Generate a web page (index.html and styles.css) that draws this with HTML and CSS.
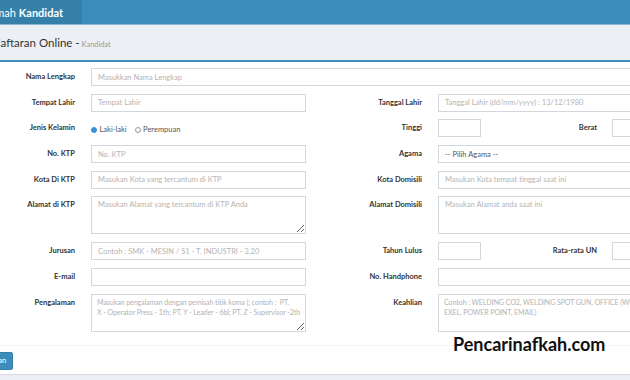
FILE: index.html
```html
<!DOCTYPE html>
<html lang="id">
<head>
<meta charset="utf-8">
<title>Pendaftaran Online - Kandidat</title>
<link rel="stylesheet" href="styles.css">
</head>
<body>
<div class="page">
  <header class="main-header">
    <div class="logo"><span>Rumah&nbsp;</span><b>Kandidat</b></div>
    <nav class="navbar"></nav>
  </header>
  <section class="content-header">
    <h1 class="title">Pendaftaran Online <span class="dash">-</span> <small>Kandidat</small></h1>
  </section>
  <section class="content">
    <div class="box">
      <form class="form">
        <label class="lbl">Nama Lengkap</label>
        <input class="in wide" type="text" placeholder="Masukkan Nama Lengkap">

        <label class="lbl">Tempat Lahir</label>
        <input class="in" type="text" placeholder="Tempat Lahir">
        <label class="lbl">Tanggal Lahir</label>
        <input class="in" type="text" placeholder="Tanggal Lahir (dd/mm/yyyy) : 13/12/1980">

        <label class="lbl">Jenis Kelamin</label>
        <div class="radios">
          <span class="radio on"></span><span class="rtext">Laki-laki</span>
          <span class="radio"></span><span class="rtext">Perempuan</span>
        </div>
        <label class="lbl">Tinggi</label>
        <div class="pair">
          <input class="in s1" type="text">
          <label class="lbl grow">Berat</label>
          <input class="in s2" type="text">
        </div>

        <label class="lbl">No. KTP</label>
        <input class="in" type="text" placeholder="No. KTP">
        <label class="lbl">Agama</label>
        <select class="in sel"><option>-- Pilih Agama --</option></select>

        <label class="lbl">Kota Di KTP</label>
        <input class="in" type="text" placeholder="Masukan Kota yang tercantum di KTP">
        <label class="lbl">Kota Domisili</label>
        <input class="in" type="text" placeholder="Masukan Kota tempat tinggal saat ini">

        <label class="lbl">Alamat di KTP</label>
        <textarea class="in ta" placeholder="Masukan Alamat yang tercantum di KTP Anda"></textarea>
        <label class="lbl">Alamat Domisili</label>
        <textarea class="in ta" placeholder="Masukan Alamat anda saat ini"></textarea>

        <label class="lbl">Jurusan</label>
        <input class="in" type="text" placeholder="Contoh : SMK - MESIN / S1 - T. INDUSTRI - 3,20">
        <label class="lbl">Tahun Lulus</label>
        <div class="pair">
          <input class="in s1" type="text">
          <label class="lbl grow">Rata-rata UN</label>
          <input class="in s2" type="text">
        </div>

        <label class="lbl">E-mail</label>
        <input class="in" type="text">
        <label class="lbl">No. Handphone</label>
        <input class="in" type="text">

        <label class="lbl">Pengalaman</label>
        <textarea class="in ta long" placeholder="Masukan pengalaman dengan pemisah titik koma (; contoh :  PT.&#10;X - Operator Press - 1th; PT. Y - Leader - 6bl; PT. Z - Supervisor -2th"></textarea>
        <label class="lbl">Keahlian</label>
        <textarea class="in ta long" placeholder="Contoh : WELDING CO2, WELDING SPOT GUN, OFFICE (WORD,&#10;EXEL, POWER POINT, EMAIL)"></textarea>
      </form>
      <div class="box-footer"><button class="btn" type="button">Simpan</button></div>
    </div>
  </section>
</div>
<div class="watermark">Pencarinafkah.com</div>
</body>
</html>
```
FILE: styles.css
```css
* { box-sizing: border-box; }
html, body { margin: 0; padding: 0; }
body {
  background: #ecf0f5;
  overflow: hidden;
  font-family: Lato, "Noto Sans", sans-serif;
  color: #333;
  position: relative;
  height: 380px;
}
.page { width: 740px; margin-left: -50px; }

.main-header {
  display: flex;
  height: 25px;
  background: #3c8dbc;
  border-bottom: 1px solid #8db9d6;
}
.logo {
  width: 132px;
  background: #367fa9;
  color: #fff;
  display: flex;
  align-items: center;
  justify-content: flex-end;
  padding-right: 19px;
  font-size: 11px;
  white-space: nowrap;
}
.logo b { font-weight: 700; }
.navbar { flex: 1; }

.content-header {
  height: 35px;
  display: flex;
  align-items: center;
  padding-left: 25px;
}
.title {
  margin: 0;
  font-size: 11.5px;
  font-weight: 400;
  color: #333;
  white-space: nowrap;
}
.title small { font-size: 7.4px; color: #999; margin-left: -1px; }

.content { padding: 0 10px; }
.box {
  background: #fff;
  border-top: 2px solid #3c8dbc;
  box-shadow: 0 1px 1px rgba(0,0,0,.08);
}

.form {
  display: grid;
  grid-template-columns: 110px 215px 100px 215px;
  column-gap: 16px;
  row-gap: 7.7px;
  padding: 6px 0 13px 5px;
  margin: 0;
}
.lbl {
  font-weight: 700;
  font-size: 7.5px;
  line-height: 18px;
  text-align: right;
  white-space: nowrap;
  color: #333;
  align-self: start;
}
.in {
  display: block;
  width: 100%;
  height: 18px;
  margin: 0;
  border: 1px solid #d2d6de;
  border-radius: 0;
  padding: 0 6px;
  font-family: Lato, "Noto Sans", sans-serif;
  font-size: 7.5px;
  color: #555;
  background: #fff;
  outline: none;
}
.in::placeholder { color: #b4b4b4; opacity: 1; }
.wide { grid-column: 2 / -1; }
.ta {
  height: 38px;
  padding: 3px 6px;
  line-height: 10.4px;
}
.ta.long {
  font-size: 7.1px;
  letter-spacing: -0.1px;
  padding: 3px 5px;
  white-space: pre;
  overflow: hidden;
}
.sel { appearance: none; -webkit-appearance: none; }

.radios {
  display: flex;
  align-items: center;
  height: 18px;
  padding-top: 3px;
  font-size: 7.5px;
  color: #555;
}
.radio {
  width: 6px;
  height: 6px;
  border-radius: 50%;
  border: 1px solid #9a9a9a;
  background: #fff;
  flex: none;
}
.radio.on { border-color: #3b8fd9; background: #3b8fd9; }
.rtext { margin: 0 7px 0 2px; }
.rtext + .radio { margin-left: 1px; }
.radio + .rtext { margin-left: 2.5px; }

.pair { display: flex; }
.pair .s1 { width: 43px; flex: none; }
.pair .s2 { width: 41px; flex: none; }
.pair .grow { flex: 1; padding-right: 15px; }

.box-footer {
  border-top: 1px solid #f4f4f4;
  padding: 6px 15px 4px;
}
.btn {
  display: block;
  height: 18px;
  padding: 0 6px;
  border: 1px solid #367fa9;
  border-radius: 2px;
  background: #3c8dbc;
  color: #fff;
  font-family: Lato, "Noto Sans", sans-serif;
  font-size: 7.5px;
}

.watermark {
  position: absolute;
  left: 453px;
  top: 335px;
  font-family: Lato, "Noto Sans", sans-serif;
  font-weight: 700;
  font-size: 18px;
  line-height: 18px;
  color: #111;
  white-space: nowrap;
}
```
